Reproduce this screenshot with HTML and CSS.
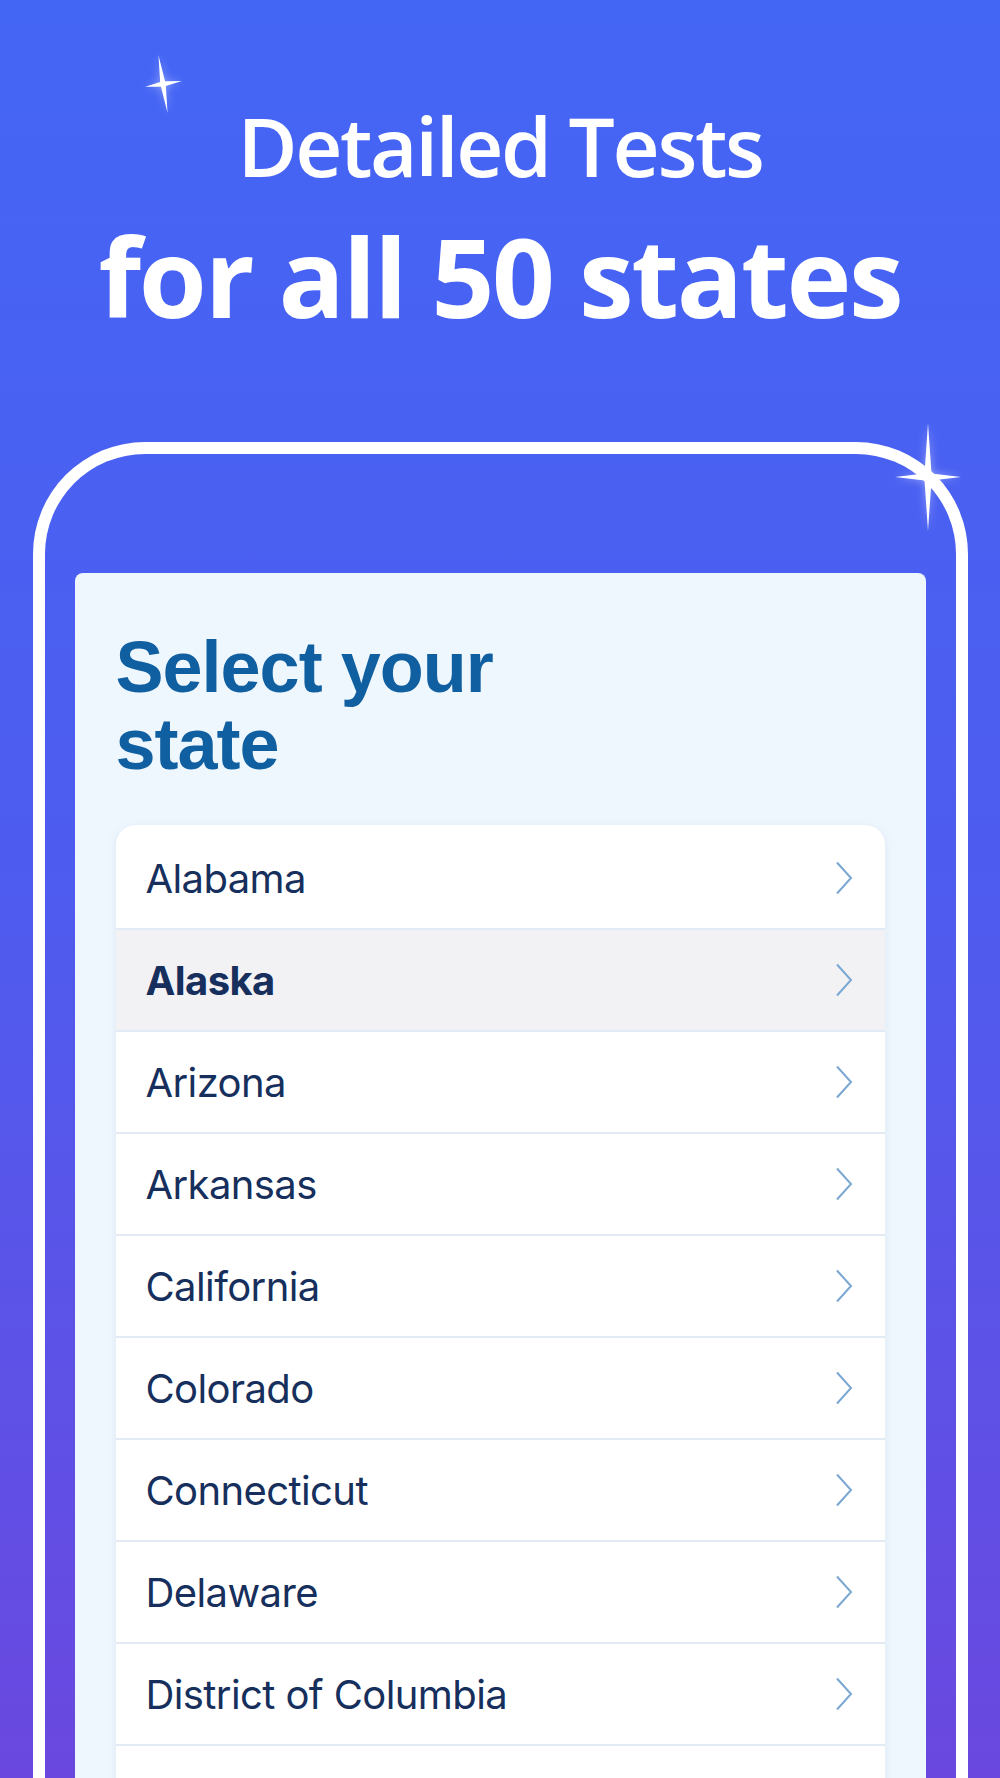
FILE: index.html
```html
<!DOCTYPE html>
<html lang="en">
<head>
    <meta charset="UTF-8">
    <meta name="viewport" content="width=device-width, initial-scale=1.0">
    <title>Select your state</title>
    <link rel="stylesheet" href="styles.css">
</head>
<body>
    <header class="hero">
        <svg class="sparkle sparkle-small" width="40" height="62" viewBox="-20 -31 40 62">
            <path d="M0 -29 L2.5 -2.5 L19 0 L2.5 2.5 L0 29 L-2.5 2.5 L-18 0 L-2.5 -2.5 Z" fill="#fff" transform="rotate(-9)"/>
        </svg>
        <h1 class="hero-title">
            <span class="hero-line">Detailed Tests</span>
            <span class="hero-line hero-line-big">for all 50 states</span>
        </h1>
    </header>

    <div class="phone">
        <svg class="sparkle sparkle-big" width="70" height="112" viewBox="-35 -56 70 112">
            <path d="M0 -54 L3.5 -3.5 L33 0 L3.5 3.5 L0 54 L-3.5 3.5 L-33 0 L-3.5 -3.5 Z" fill="#fff"/>
        </svg>

        <div class="screen">
            <h2 class="screen-title">Select your state</h2>

            <ul class="state-list">
                <li class="state-row"><span>Alabama</span><svg class="chevron" width="18" height="34" viewBox="0 0 18 34"><path d="M2 1.5 L16 17 L2 32.5"/></svg></li>
                <li class="state-row active"><span>Alaska</span><svg class="chevron" width="18" height="34" viewBox="0 0 18 34"><path d="M2 1.5 L16 17 L2 32.5"/></svg></li>
                <li class="state-row"><span>Arizona</span><svg class="chevron" width="18" height="34" viewBox="0 0 18 34"><path d="M2 1.5 L16 17 L2 32.5"/></svg></li>
                <li class="state-row"><span>Arkansas</span><svg class="chevron" width="18" height="34" viewBox="0 0 18 34"><path d="M2 1.5 L16 17 L2 32.5"/></svg></li>
                <li class="state-row"><span>California</span><svg class="chevron" width="18" height="34" viewBox="0 0 18 34"><path d="M2 1.5 L16 17 L2 32.5"/></svg></li>
                <li class="state-row"><span>Colorado</span><svg class="chevron" width="18" height="34" viewBox="0 0 18 34"><path d="M2 1.5 L16 17 L2 32.5"/></svg></li>
                <li class="state-row"><span>Connecticut</span><svg class="chevron" width="18" height="34" viewBox="0 0 18 34"><path d="M2 1.5 L16 17 L2 32.5"/></svg></li>
                <li class="state-row"><span>Delaware</span><svg class="chevron" width="18" height="34" viewBox="0 0 18 34"><path d="M2 1.5 L16 17 L2 32.5"/></svg></li>
                <li class="state-row"><span>District of Columbia</span><svg class="chevron" width="18" height="34" viewBox="0 0 18 34"><path d="M2 1.5 L16 17 L2 32.5"/></svg></li>
            </ul>
        </div>
    </div>
</body>
</html>
```

FILE: styles.css
```css
/* Basic reset */
* {
    margin: 0;
    padding: 0;
    box-sizing: border-box;
}

/* Blue to violet backdrop */
body {
    height: 1778px;
    overflow: hidden;
    background: linear-gradient(180deg, #4466f5 0%, #4e5cef 50%, #6a48df 100%);
    font-family: "Open Sans", "Noto Sans", sans-serif;
}

/* Headline */
.hero {
    position: relative;
    padding-top: 95px;
    text-align: center;
    color: #fff;
}

.hero-title {
    font-weight: 600;
}

.hero-line {
    display: block;
    font-size: 82px;
    line-height: 100px;
    letter-spacing: -2.4px;
}

.hero-line-big {
    font-size: 110px;
    line-height: 160px;
    font-weight: 700;
    letter-spacing: -2.3px;
}

/* Sparkles */
.sparkle {
    position: absolute;
    filter: drop-shadow(0 0 4px rgba(255, 255, 255, 0.45));
}

.sparkle-small {
    left: 143px;
    top: 53px;
}

.sparkle-big {
    right: -7px;
    top: -33px;
    z-index: 2;
}

/* Phone outline */
.phone {
    position: relative;
    width: 935px;
    margin: 87px auto 0;
    padding: 119px 30px 0;
    border: 12px solid #fff;
    border-bottom: none;
    border-radius: 112px 112px 0 0;
}

/* Screen card */
.screen {
    background: #eff7fe;
    border-radius: 8px;
    padding: 56px 41px 0;
}

.screen-title {
    max-width: 440px;
    font-family: "Liberation Sans", Arial, sans-serif;
    font-size: 72px;
    line-height: 77px;
    font-weight: 700;
    letter-spacing: -1px;
    color: #0f5fa1;
}

/* State list */
.state-list {
    list-style: none;
    margin-top: 42px;
    padding: 3px 0 100px;
    background: #fff;
    border-radius: 20px 20px 0 0;
    box-shadow: 0 2px 12px rgba(30, 70, 130, 0.08);
}

.state-row {
    display: flex;
    align-items: center;
    justify-content: space-between;
    height: 102px;
    padding: 0 32px 0 30px;
    border-bottom: 2px solid #e2ebf5;
    font-family: Inter, "Noto Sans", sans-serif;
    font-size: 40px;
    letter-spacing: -0.6px;
    color: #162f5c;
}

.state-row.active {
    background: #f2f2f5;
    font-weight: 700;
}

.chevron path {
    fill: none;
    stroke: #7ba7d3;
    stroke-width: 2;
}
```
